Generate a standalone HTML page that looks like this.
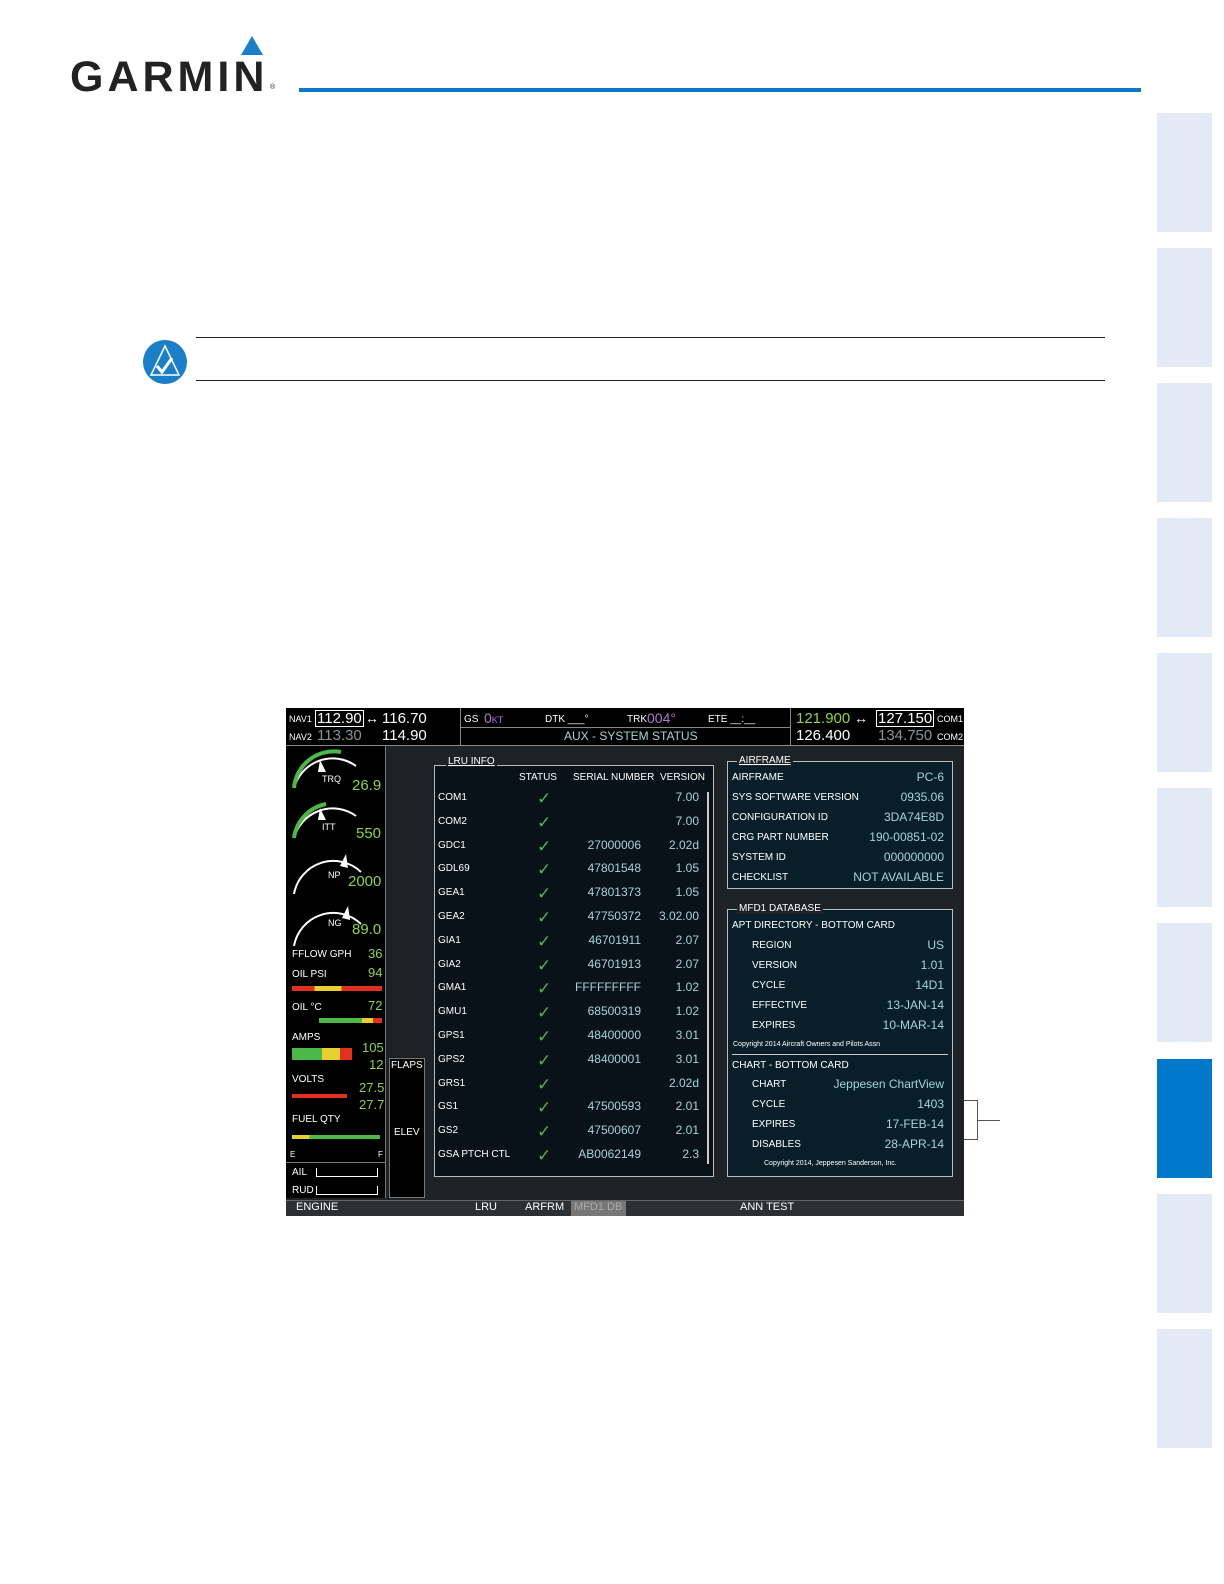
<!DOCTYPE html>
<html><head><meta charset="utf-8"><style>
*{margin:0;padding:0;box-sizing:border-box}
body{width:1224px;height:1584px;background:#fff;position:relative;overflow:hidden;font-family:"Liberation Sans",sans-serif}
.a{position:absolute;white-space:nowrap}
.tab{position:absolute;left:1157px;width:55px;height:119px;background:#e3e9f5}
.scr{position:absolute;left:286px;top:708px;width:678px;height:508px;background:#1c2226;overflow:hidden;font-family:"Liberation Sans Narrow","Liberation Sans",sans-serif;font-size:11px;color:#fff}
.w{color:#fff}.c{color:#a6d4d6}.g{color:#8fd14f}.m{color:#b07ad0}.gr{color:#8a9296}
.r{text-align:right}
</style></head><body>
<!-- header -->
<div class="a" style="left:70px;top:53px;font-size:43px;font-weight:bold;letter-spacing:4px;color:#222">GARMIN</div>
<div class="a" style="left:270px;top:84px;font-size:7px;color:#222">®</div>
<svg class="a" style="left:240px;top:36px" width="24" height="20"><polygon points="12,0 23,19 1,19" fill="#1a7fc6"/></svg>
<div class="a" style="left:299px;top:88px;width:842px;height:4px;background:#0a78c2"></div>
<div class="tab" style="top:113px"></div><div class="tab" style="top:248px"></div><div class="tab" style="top:383px"></div><div class="tab" style="top:518px"></div><div class="tab" style="top:653px"></div><div class="tab" style="top:788px"></div><div class="tab" style="top:923px"></div><div class="tab" style="top:1059px;background:#0077c8"></div><div class="tab" style="top:1194px"></div><div class="tab" style="top:1329px"></div>
<!-- note -->
<svg class="a" style="left:142px;top:339px" width="46" height="46"><circle cx="23" cy="23" r="22" fill="#1a7fc6"/><polygon points="23,7 37,36 9,36" fill="none" stroke="#fff" stroke-width="1.5"/><path d="M15 27 L20 33 L30 19" fill="none" stroke="#fff" stroke-width="3"/></svg>
<div class="a" style="left:196px;top:337px;width:909px;height:1px;background:#222"></div>
<div class="a" style="left:196px;top:380px;width:909px;height:1px;background:#222"></div>
<!-- bracket -->
<div class="a" style="left:952px;top:1100px;width:26px;height:40px;border:1px solid #555;border-left:none"></div>
<div class="a" style="left:978px;top:1120px;width:22px;height:1px;background:#555"></div>

<div class="scr">
 <div class="a" style="left:0;top:0;width:678px;height:37px;background:#000"></div>
 <div class="a" style="left:174px;top:0;width:1px;height:37px;background:#888"></div>
 <div class="a" style="left:504px;top:0;width:1px;height:37px;background:#888"></div>
 <div class="a" style="left:175px;top:19px;width:329px;height:1px;background:#888"></div>
 <div class="a" style="left:0;top:37px;width:678px;height:1px;background:#888"></div>
 <div class="a w" style="left:3px;top:6px;font-size:9px">NAV1</div>
 <div class="a w" style="left:29px;top:2px;font-size:15px;border:1px solid #fff;padding:0 1px;line-height:15px">112.90</div>
 <div class="a w" style="left:79px;top:2px;font-size:14px">↔</div>
 <div class="a w" style="left:96px;top:2px;font-size:15px">116.70</div>
 <div class="a w" style="left:3px;top:24px;font-size:9px">NAV2</div>
 <div class="a gr" style="left:31px;top:19px;font-size:15px">113.30</div>
 <div class="a w" style="left:96px;top:19px;font-size:15px">114.90</div>
 <div class="a w" style="left:178px;top:6px;font-size:10px">GS</div><div class="a m" style="left:198px;top:2px;font-size:14px">0<span style="font-size:9px">KT</span></div>
 <div class="a w" style="left:259px;top:6px;font-size:10px">DTK ___°</div>
 <div class="a w" style="left:341px;top:6px;font-size:10px">TRK</div><div class="a m" style="left:361px;top:2px;font-size:14px">004°</div>
 <div class="a w" style="left:422px;top:6px;font-size:10px">ETE __:__</div>
 <div class="a c" style="left:278px;top:21px;font-size:12px">AUX - SYSTEM STATUS</div>
 <div class="a g" style="left:510px;top:2px;font-size:15px">121.900</div>
 <div class="a w" style="left:568px;top:2px;font-size:14px">↔</div>
 <div class="a w" style="left:590px;top:2px;font-size:15px;border:1px solid #fff;padding:0 1px;line-height:15px">127.150</div>
 <div class="a w" style="left:651px;top:6px;font-size:9px">COM1</div>
 <div class="a w" style="left:510px;top:19px;font-size:15px">126.400</div>
 <div class="a gr" style="left:592px;top:19px;font-size:15px">134.750</div>
 <div class="a w" style="left:651px;top:24px;font-size:9px">COM2</div>
 <!-- engine panel -->
 <div class="a" style="left:0;top:38px;width:100px;height:452px;background:#000;border-right:1px solid #777"></div>
 <div class="a" style="left:103px;top:350px;width:36px;height:140px;background:#000;border:1px solid #777"></div>
 <svg class="a" style="left:0;top:38px" width="100" height="220">
  <g fill="none" stroke-width="2">
   <path d="M8 42 A40 40 0 0 1 70 20" stroke="#fff"/><path d="M8 42 A40 40 0 0 1 55 6" stroke="#4cb848" stroke-width="4"/>
   <path d="M8 92 A40 40 0 0 1 70 70" stroke="#fff"/><path d="M8 92 A40 40 0 0 1 40 58" stroke="#4cb848" stroke-width="4"/>
   <path d="M8 148 A40 40 0 0 1 75 126" stroke="#fff"/>
   <path d="M8 200 A40 40 0 0 1 75 178" stroke="#fff"/>
  </g>
  <polygon points="34,14 40,26 32,26" fill="#fff"/><polygon points="34,62 40,74 32,74" fill="#fff"/>
  <polygon points="60,108 62,122 54,120" fill="#fff"/><polygon points="62,160 64,174 56,172" fill="#fff"/>
 </svg>
 <div class="a w" style="left:36px;top:66px;font-size:9px">TRQ</div><div class="a g" style="left:66px;top:69px;font-size:15px">26.9</div>
 <div class="a w" style="left:36px;top:114px;font-size:9px">ITT</div><div class="a g" style="left:70px;top:117px;font-size:15px">550</div>
 <div class="a w" style="left:42px;top:162px;font-size:9px">NP</div><div class="a g" style="left:62px;top:165px;font-size:15px">2000</div>
 <div class="a w" style="left:42px;top:210px;font-size:9px">NG</div><div class="a g" style="left:66px;top:213px;font-size:15px">89.0</div>
 <div class="a w" style="left:6px;top:241px;font-size:10px">FFLOW GPH</div><div class="a g" style="left:82px;top:238px;font-size:13px">36</div>
 <div class="a w" style="left:6px;top:261px;font-size:10px">OIL PSI</div><div class="a g" style="left:82px;top:257px;font-size:13px">94</div>
 <div class="a" style="left:6px;top:278px;width:90px;height:5px;background:linear-gradient(90deg,#e03020 25%,#e8d030 25% 55%,#e03020 55%)"></div>
 <div class="a w" style="left:6px;top:294px;font-size:10px">OIL °C</div><div class="a g" style="left:82px;top:290px;font-size:13px">72</div>
 <div class="a" style="left:6px;top:310px;width:90px;height:5px;background:linear-gradient(90deg,#000 30%,#4cb848 30% 78%,#e8d030 78% 90%,#e03020 90%)"></div>
 <div class="a w" style="left:6px;top:324px;font-size:10px">AMPS</div><div class="a g" style="left:76px;top:332px;font-size:13px">105</div><div class="a g" style="left:83px;top:349px;font-size:13px">12</div>
 <div class="a" style="left:6px;top:340px;width:60px;height:12px;background:linear-gradient(90deg,#4cb848 50%,#e8d030 50% 80%,#e03020 80%)"></div>
 <div class="a w" style="left:6px;top:366px;font-size:10px">VOLTS</div><div class="a g" style="left:73px;top:372px;font-size:13px">27.5</div><div class="a g" style="left:73px;top:389px;font-size:13px">27.7</div>
 <div class="a" style="left:6px;top:386px;width:55px;height:4px;background:#e03020"></div>
 <div class="a w" style="left:6px;top:406px;font-size:10px">FUEL QTY</div>
 <div class="a" style="left:6px;top:427px;width:88px;height:4px;background:linear-gradient(90deg,#e8d030 20%,#4cb848 20%)"></div>
 <div class="a w" style="left:4px;top:442px;font-size:8px">E</div><div class="a w" style="left:92px;top:442px;font-size:8px">F</div>
 <div class="a" style="left:0;top:454px;width:100px;height:1px;background:#777"></div>
 <div class="a w" style="left:6px;top:459px;font-size:10px">AIL</div><div class="a" style="left:30px;top:460px;width:62px;height:9px;border:1px solid #fff;border-top:none"></div>
 <div class="a w" style="left:6px;top:477px;font-size:10px">RUD</div><div class="a" style="left:30px;top:478px;width:62px;height:9px;border:1px solid #fff;border-top:none"></div>
 <div class="a w" style="left:105px;top:352px;font-size:10px">FLAPS</div>
 <div class="a w" style="left:108px;top:419px;font-size:10px">ELEV</div>
 <!-- LRU panel -->
 <div class="a" style="left:148px;top:57px;width:280px;height:412px;background:#081218;border:1px solid #bbb"></div>
 <div class="a w" style="left:160px;top:48px;font-size:10px;background:#1c2226;padding:0 2px;text-decoration:underline">LRU INFO</div>
 <div class="a w" style="left:233px;top:64px;font-size:10px">STATUS</div><div class="a w" style="left:287px;top:64px;font-size:10px">SERIAL NUMBER</div><div class="a w" style="left:374px;top:64px;font-size:10px">VERSION</div>
 <div class="a" style="left:421px;top:84px;width:2px;height:372px;background:#ccc"></div>
 <div id="lru"></div>
 <!-- airframe -->
 <div class="a" style="left:441px;top:53px;width:226px;height:128px;background:#081f2a;border:1px solid #bbb"></div>
 <div class="a w" style="left:451px;top:47px;font-size:10px;background:#1c2226;padding:0 2px;text-decoration:underline">AIRFRAME</div>
 <div id="af"></div>
 <!-- MFD1 DB -->
 <div class="a" style="left:441px;top:201px;width:226px;height:268px;background:#081f2a;border:1px solid #bbb"></div>
 <div class="a w" style="left:451px;top:195px;font-size:10px;background:#1c2226;padding:0 2px">MFD1 DATABASE</div>
 <div class="a" style="left:446px;top:346px;width:216px;height:1px;background:#ccc"></div>
 <div id="db"></div>
 <!-- softkeys -->
 <div class="a" style="left:0;top:492px;width:678px;height:16px;background:#2a3034;border-top:1px solid #666"></div>
 <div class="a w" style="left:10px;top:493px;font-size:11px">ENGINE</div>
 <div class="a w" style="left:189px;top:493px;font-size:11px">LRU</div>
 <div class="a w" style="left:239px;top:493px;font-size:11px">ARFRM</div>
 <div class="a" style="left:285px;top:493px;width:55px;height:15px;background:#777"></div>
 <div class="a" style="left:288px;top:493px;font-size:11px;color:#aaa">MFD1 DB</div>
 <div class="a w" style="left:454px;top:493px;font-size:11px">ANN TEST</div>
</div>
<script>
var L=[["COM1","","7.00"],["COM2","","7.00"],["GDC1","27000006","2.02d"],["GDL69","47801548","1.05"],["GEA1","47801373","1.05"],["GEA2","47750372","3.02.00"],["GIA1","46701911","2.07"],["GIA2","46701913","2.07"],["GMA1","FFFFFFFFF","1.02"],["GMU1","68500319","1.02"],["GPS1","48400000","3.01"],["GPS2","48400001","3.01"],["GRS1","","2.02d"],["GS1","47500593","2.01"],["GS2","47500607","2.01"],["GSA PTCH CTL","AB0062149","2.3"]];
var h="";L.forEach(function(r,i){var y=81+i*23.8;
h+='<div class="a w" style="left:152px;top:'+(y+3)+'px;font-size:10px">'+r[0]+'</div>';
h+='<div class="a" style="left:251px;top:'+y+'px;font-size:17px;color:#4cb848">✓</div>';
h+='<div class="a c r" style="left:255px;width:100px;top:'+(y+1)+'px;font-size:12px">'+r[1]+'</div>';
h+='<div class="a c r" style="left:353px;width:60px;top:'+(y+1)+'px;font-size:12px">'+r[2]+'</div>';});
document.getElementById("lru").outerHTML=h;
var A=[["AIRFRAME","PC-6"],["SYS SOFTWARE VERSION","0935.06"],["CONFIGURATION ID","3DA74E8D"],["CRG PART NUMBER","190-00851-02"],["SYSTEM ID","000000000"],["CHECKLIST","NOT AVAILABLE"]];
h="";A.forEach(function(r,i){var y=62+i*20;
h+='<div class="a w" style="left:446px;top:'+(y+2)+'px;font-size:10px">'+r[0]+'</div><div class="a c r" style="left:540px;width:118px;top:'+y+'px;font-size:12px">'+r[1]+'</div>';});
document.getElementById("af").outerHTML=h;
var D=[[210,"APT DIRECTORY - BOTTOM CARD","",446],[230,"REGION","US"],[250,"VERSION","1.01"],[270,"CYCLE","14D1"],[290,"EFFECTIVE","13-JAN-14"],[310,"EXPIRES","10-MAR-14"],[350,"CHART - BOTTOM CARD","",446],[369,"CHART","Jeppesen ChartView"],[389,"CYCLE","1403"],[409,"EXPIRES","17-FEB-14"],[429,"DISABLES","28-APR-14"]];
h="";D.forEach(function(r){var x=r[3]||466;
h+='<div class="a w" style="left:'+x+'px;top:'+(r[0]+2)+'px;font-size:10px">'+r[1]+'</div><div class="a c r" style="left:540px;width:118px;top:'+r[0]+'px;font-size:12px">'+r[2]+'</div>';});
h+='<div class="a w" style="left:447px;top:333px;font-size:7px">Copyright 2014 Aircraft Owners and Pilots Assn</div>';
h+='<div class="a w" style="left:478px;top:452px;font-size:7px">Copyright 2014, Jeppesen Sanderson, Inc.</div>';
document.getElementById("db").outerHTML=h;
</script>
</body></html>
